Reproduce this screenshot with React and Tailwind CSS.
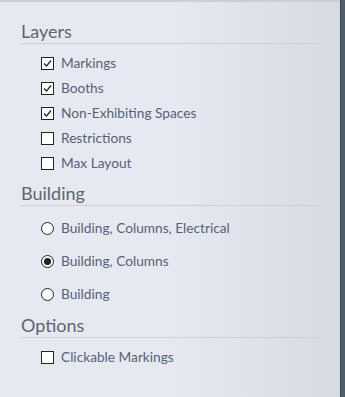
import React from "react";

function Check({ checked }) {
  return (
    <span className="w-[13px] h-[13px] border border-[#222] bg-white flex items-center justify-center shrink-0">
      {checked && (
        <svg width="11" height="11" viewBox="0 0 11 11">
          <path d="M2 5.5 L4.5 8 L9 2.5" fill="none" stroke="#222" strokeWidth="1.2" />
        </svg>
      )}
    </span>
  );
}

function Radio({ checked }) {
  return (
    <span className="w-[13px] h-[13px] rounded-full border border-[#222] bg-white flex items-center justify-center shrink-0">
      {checked && <span className="w-[7px] h-[7px] rounded-full bg-[#222]" />}
    </span>
  );
}

function Heading({ children }) {
  return (
    <div className="text-[18px] leading-[22px] text-[#5f6572] border-b border-[#cfcfd2] pb-[1px] w-[299px]">
      {children}
    </div>
  );
}

export default function App() {
  const layers = [
    ["Markings", true],
    ["Booths", true],
    ["Non-Exhibiting Spaces", true],
    ["Restrictions", false],
    ["Max Layout", false],
  ];
  const building = [
    ["Building, Columns, Electrical", false],
    ["Building, Columns", true],
    ["Building", false],
  ];
  return (
    <div
      className="w-[345px] h-[397px] flex overflow-hidden"
      style={{ fontFamily: "Lato, 'Open Sans', sans-serif" }}
    >
      <div className="flex-1 h-full border-t-2 border-[#cdced2] bg-gradient-to-r from-[#e7e9f1] via-[#e6e9f1] to-[#d6dae3] pl-[21px] pt-[18px] flex flex-col">
        <Heading>Layers</Heading>
        <div className="flex flex-col pt-[7px] pl-[20px]">
          {layers.map(([label, c]) => (
            <div key={label} className="h-[25px] flex items-center gap-[7px] text-[13.7px] text-[#56627a]">
              <Check checked={c} />
              <span>{label}</span>
            </div>
          ))}
        </div>
        <div className="mt-[6px]">
          <Heading>Building</Heading>
        </div>
        <div className="flex flex-col pt-[6px] pl-[20px]">
          {building.map(([label, c]) => (
            <div key={label} className="h-[33px] flex items-center gap-[7px] text-[13.7px] text-[#56627a]">
              <Radio checked={c} />
              <span>{label}</span>
            </div>
          ))}
        </div>
        <div className="mt-[3px]">
          <Heading>Options</Heading>
        </div>
        <div className="flex flex-col pt-[7px] pl-[20px]">
          <div className="h-[25px] flex items-center gap-[7px] text-[13.7px] text-[#56627a]">
            <Check checked={false} />
            <span>Clickable Markings</span>
          </div>
        </div>
      </div>
      <div className="w-[5px] h-full bg-[#4e5e6c] border-l border-[#3d4a56]" />
    </div>
  );
}
